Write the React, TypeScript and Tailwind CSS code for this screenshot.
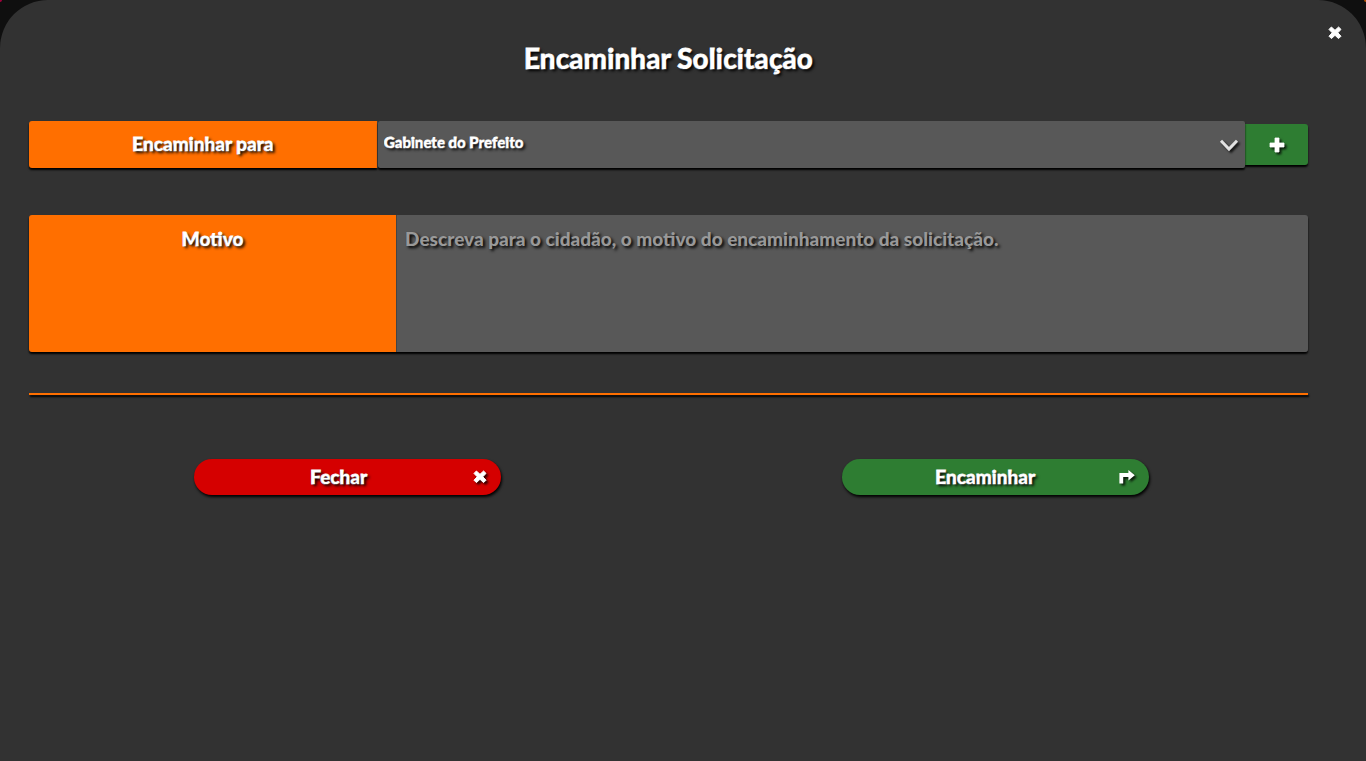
import React from "react";

const TEXT_SHADOW = "[text-shadow:2px_2px_3px_#000]";
const HEAVY = "[-webkit-text-stroke:1px_currentColor] [paint-order:stroke_fill]";
const ICON_SHADOW = "[filter:drop-shadow(2px_2px_1px_rgba(0,0,0,0.8))]";
const BOX_SHADOW = "shadow-[0_2px_2px_#000]";

function CrossIcon() {
  return (
    <svg width="14" height="14" viewBox="0 0 14 14" aria-hidden="true">
      <path
        d="M3.4 1 7 4.3 10.6 1 13 3.4 9.8 6.8 13 10.2 10.6 12.6 7 9.3 3.4 12.6 1 10.2 4.2 6.8 1 3.4Z"
        fill="white"
        stroke="white"
        strokeWidth="1"
        strokeLinejoin="round"
      />
    </svg>
  );
}

function PlusIcon() {
  return (
    <svg width="16" height="16" viewBox="0 0 16 16" aria-hidden="true">
      <path
        d="M6 1H10V6H15V10H10V15H6V10H1V6H6Z"
        fill="white"
        stroke="white"
        strokeWidth="0.8"
        strokeLinejoin="round"
      />
    </svg>
  );
}

function ForwardIcon() {
  return (
    <svg width="16" height="14" viewBox="0 0 16 14" aria-hidden="true">
      <path d="M0.4 13.4V3H9.4V0L15.8 5.2 9.4 10.6V7H4.2V13.4Z" fill="white" />
    </svg>
  );
}

function ChevronIcon() {
  return (
    <svg width="20" height="14" viewBox="0 0 20 14" fill="none" aria-hidden="true">
      <path d="M2 2.8 10 11 18 2.8" stroke="#e2e2e2" strokeWidth="3" />
    </svg>
  );
}

export default function App() {
  return (
    <div className="relative min-h-screen bg-[#0f0f0f] font-['Lato','Open_Sans',sans-serif] font-black text-white">
      <main
        role="dialog"
        aria-labelledby="title"
        className="relative min-h-screen rounded-t-[48px] bg-[#323232] pl-[29px] pr-[58px] pt-10"
      >
        <button type="button" aria-label="Fechar janela" className="absolute right-6 top-[26px]">
          <CrossIcon />
        </button>

        <h1 id="title" className={`text-center text-[28px] leading-9 ${HEAVY} ${TEXT_SHADOW}`}>
          Encaminhar Solicitação
        </h1>

        <form onSubmit={(e) => e.preventDefault()}>
          <div className="mt-[45px] flex items-center">
            <label
              htmlFor="destino"
              className={`flex h-[47px] w-[27.2%] items-center justify-center rounded-l-[3px] bg-[#ff6f00] text-[19px] ${HEAVY} ${BOX_SHADOW} ${TEXT_SHADOW}`}
            >
              Encaminhar para
            </label>
            <div className="relative flex-1 border-l border-[#444]">
              <select
                id="destino"
                className={`block h-[47px] w-full appearance-none rounded-[2px] bg-[#585858] px-1.5 pb-1 text-[15px] outline-none ${HEAVY} ${BOX_SHADOW} ${TEXT_SHADOW}`}
              >
                <option>Gabinete do Prefeito</option>
              </select>
              <span className={`pointer-events-none absolute inset-y-0 right-1.5 flex items-center ${ICON_SHADOW}`}>
                <ChevronIcon />
              </span>
            </div>
            <button
              type="button"
              aria-label="Adicionar"
              className={`flex h-[41px] w-[63px] items-center justify-center rounded-r-[3px] bg-[#2e7d32] ${BOX_SHADOW}`}
            >
              <span className={ICON_SHADOW}>
                <PlusIcon />
              </span>
            </button>
          </div>

          <div className={`mt-[47px] flex h-[137px] rounded-[3px] ${BOX_SHADOW}`}>
            <label
              htmlFor="motivo"
              className={`w-[28.7%] rounded-l-[3px] bg-[#ff6f00] pt-3 text-center text-[19px] leading-6 ${HEAVY} ${TEXT_SHADOW}`}
            >
              Motivo
            </label>
            <textarea
              id="motivo"
              placeholder="Descreva para o cidadão, o motivo do encaminhamento da solicitação."
              className={`min-w-0 flex-1 resize-none rounded-r-[3px] border-l border-[#444] bg-[#585858] px-2 pt-3 text-[19px] leading-6 outline-none placeholder:text-[#999] ${TEXT_SHADOW}`}
            />
          </div>

          <hr className="mt-[41px] h-0.5 border-0 bg-[#ff6f00] shadow-[1px_2px_2px_#000]" />

          <div className="-ml-[5px] -mr-[11px] mt-16 grid grid-cols-2 justify-items-center">
            <button
              type="button"
              className={`flex h-9 w-[47.4%] items-center rounded-full bg-[#d50000] pl-2.5 pr-3.5 text-[19px] shadow-[1px_2px_3px_#000] ${HEAVY} ${TEXT_SHADOW}`}
            >
              <span className="flex-1">Fechar</span>
              <span className={ICON_SHADOW}>
                <CrossIcon />
              </span>
            </button>
            <button
              type="submit"
              className={`flex h-9 w-[47.4%] items-center rounded-full bg-[#2e7d32] pl-2.5 pr-3.5 text-[19px] shadow-[1px_2px_3px_#000] ${HEAVY} ${TEXT_SHADOW}`}
            >
              <span className="flex-1">Encaminhar</span>
              <span className={ICON_SHADOW}>
                <ForwardIcon />
              </span>
            </button>
          </div>
        </form>
        <span className="absolute left-0 top-0 size-0.5 rounded-br-full bg-[#a3003c]" />
        <span className="absolute right-0 top-0 size-0.5 rounded-bl-full bg-[#b35000]" />
      </main>
    </div>
  );
}
